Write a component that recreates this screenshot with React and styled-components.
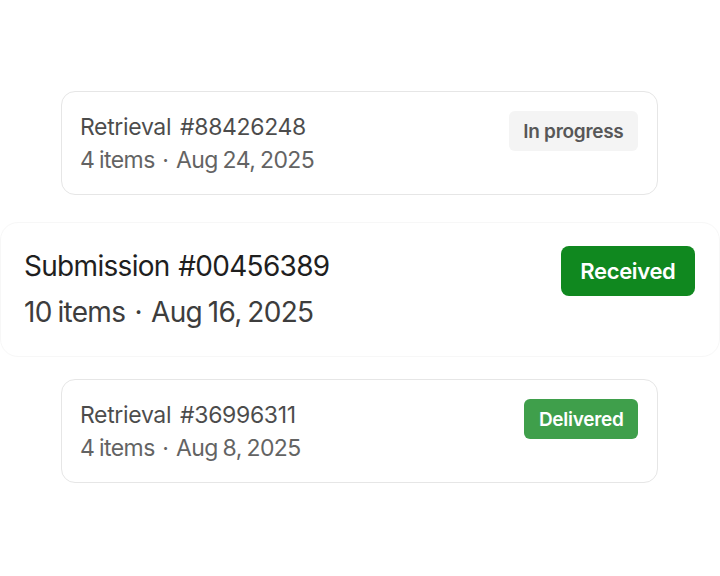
import React from 'react';
import styled, { createGlobalStyle } from 'styled-components';

const GlobalStyle = createGlobalStyle`
  html, body {
    margin: 0;
    padding: 0;
    background: #ffffff;
  }
  body {
    font-family: Inter, 'Noto Sans', 'Liberation Sans', sans-serif;
    -webkit-font-smoothing: antialiased;
  }
`;

const Page = styled.div`
  width: 720px;
  height: 576px;
  padding-top: 91px;
  box-sizing: border-box;
  display: flex;
  flex-direction: column;
  overflow: hidden;
`;

const Card = styled.div`
  display: flex;
  justify-content: space-between;
  align-items: flex-start;
  box-sizing: border-box;
  background: #ffffff;
  border: 1px solid ${(p) => (p.$featured ? '#f7f7f7' : '#e0e0e0')};
  border-radius: ${(p) => (p.$featured ? '18px' : '14px')};
  margin: ${(p) => (p.$featured ? '27px 0 22px' : '0 62px 0 61px')};
  padding: ${(p) => (p.$featured ? '20px 24px 21px 23px' : '19px 19px 17px 18px')};
  opacity: ${(p) => (p.$featured ? 1 : 0.8)};
`;

const Info = styled.div`
  display: flex;
  flex-direction: column;
`;

const Title = styled.div`
  font-size: ${(p) => (p.$featured ? '28px' : '23px')};
  line-height: ${(p) => (p.$featured ? '46px' : '33px')};
  color: #1f1f1f;
  letter-spacing: ${(p) => (p.$featured ? '-0.025em' : '-0.015em')};
  word-spacing: ${(p) => (p.$featured ? '0.05em' : '0.12em')};
  white-space: nowrap;
`;

const Meta = styled(Title)`
  color: #3d3d3d;
  letter-spacing: -0.025em;
  word-spacing: -0.05em;
`;

const Dot = styled.span`
  margin: 0 0.33em;
`;

const badgeColors = {
  progress: { bg: '#f2f2f2', fg: '#2e2e2e' },
  received: { bg: '#10881f', fg: '#ffffff' },
  delivered: { bg: '#10881f', fg: '#ffffff' },
};

const Badge = styled.div`
  display: flex;
  align-items: center;
  justify-content: center;
  box-sizing: border-box;
  height: ${(p) => (p.$featured ? '50px' : '40px')};
  padding: 0 ${(p) => (p.$featured ? '19.5px' : '14.5px')};
  margin-top: ${(p) => (p.$featured ? '3px' : '0')};
  border-radius: ${(p) => (p.$featured ? '8px' : '6px')};
  background: ${(p) => badgeColors[p.$status].bg};
  color: ${(p) => badgeColors[p.$status].fg};
  font-size: ${(p) => (p.$featured ? '22px' : '19px')};
  font-weight: 600;
  letter-spacing: -0.015em;
  white-space: nowrap;
`;

const orders = [
  { kind: 'Retrieval', id: '88426248', items: 4, date: 'Aug 24, 2025', status: 'progress', label: 'In progress' },
  { kind: 'Submission', id: '00456389', items: 10, date: 'Aug 16, 2025', status: 'received', label: 'Received', featured: true },
  { kind: 'Retrieval', id: '36996311', items: 4, date: 'Aug 8, 2025', status: 'delivered', label: 'Delivered' },
];

const OrderCard = ({ order }) => (
  <Card $featured={order.featured}>
    <Info>
      <Title $featured={order.featured}>
        {order.kind} #{order.id}
      </Title>
      <Meta $featured={order.featured}>
        {order.items} items<Dot>·</Dot>{order.date}
      </Meta>
    </Info>
    <Badge $featured={order.featured} $status={order.status}>
      {order.label}
    </Badge>
  </Card>
);

const App = () => (
  <>
    <GlobalStyle />
    <Page>
      {orders.map((o) => (
        <OrderCard key={o.id} order={o} />
      ))}
    </Page>
  </>
);

export default App;
